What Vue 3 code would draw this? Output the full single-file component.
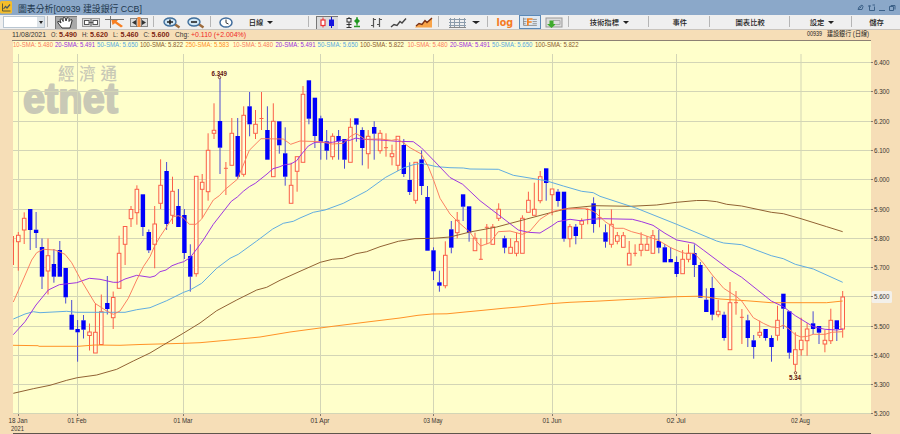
<template>
  <div class="window">
    <header class="titlebar">
      <svg class="app-icon" width="13" height="14" viewBox="0 0 13 14">
        <rect x="0" y="1" width="12" height="12.5" rx="1.5" fill="#f5bd2b" />
        <path d="M2.5 3.5V11H10.5" fill="none" stroke="#5d5a38" stroke-width="1" />
        <path d="M3.5 9L5.5 6.5L7 8L10 4.5" fill="none" stroke="#4a5a60" stroke-width="1.2" />
      </svg>
      <svg class="title" width="140" height="15">
        <text x="0" y="12" textLength="124" lengthAdjust="spacingAndGlyphs">圖表分析[00939 建設銀行 CCB]</text>
      </svg>
      <svg class="window-buttons" width="40" height="14" viewBox="0 0 40 14" fill="none" stroke="#3c6188" stroke-width="1">
        <path d="M1 9.5L2 7L5 5L6 6.5L5 9.5Z M2.5 8.5L4.5 6.5" />
        <path d="M12.5 5.5V10.5H17.5V6.5M11 6H14M15.5 5H18" />
        <path d="M22 10.5H28" />
        <path d="M32.5 6.5H36.5V10.5H32.5Z M34 6V5.5H38V9.5" />
      </svg>
    </header>

    <nav class="toolbar">
      <div class="cell select-cell">
        <div class="select"><span class="caret small"></span></div>
      </div>
      <div class="cell tools">
        <svg class="pressed" width="22" height="13" viewBox="0 0 22 13">
          <path d="M7 12L3 7Q2 5 4 5.5L6 7L5 3.5Q6 2 7.2 3.5L8.2 5.5L8 2Q9.2 .8 10.3 2.2L11 5L12 2Q13.5 1 14 2.5V5.5L15.8 3.5Q17.5 3.5 17 5L15 12Z" fill="#fff" stroke="#333" />
        </svg>
        <svg width="18" height="13" viewBox="0 0 18 13" fill="none" stroke="#555">
          <rect x=".5" y="2.5" width="17" height="8" fill="#ddd" stroke="#999" />
          <rect x="2.5" y="4.5" width="4.5" height="4" fill="#fff" />
          <rect x="11" y="4.5" width="4.5" height="4" fill="#fff" />
          <path d="M7 6.5H11M9 3V10" />
        </svg>
        <svg width="20" height="13" viewBox="0 0 20 13">
          <path d="M0 3.5H19M5.5 0V12" stroke="#777" />
          <path d="M6.5 4H13L11.5 5.5L18 10L16 11.5L10 7.2L7.5 9Z" fill="#f77f22" />
        </svg>
        <svg width="18" height="13" viewBox="0 0 18 13">
          <rect x=".5" y="2.5" width="17" height="8" fill="#ddd" stroke="#888" />
          <path d="M2 6.5L6 4V9Z M16 6.5L12 4V9Z" fill="#333" />
          <rect x="7.5" y="1" width="3" height="10" fill="#f48a3a" />
          <path d="M6.5 2V11M11.5 2V11" stroke="#777" />
        </svg>
      </div>
      <div class="cell zooms">
        <svg v-for="sign in ['+', '-']" :key="sign" width="18" height="13" viewBox="0 0 18 13">
          <path d="M11.5 8L16.5 11.5" stroke="#9d6b3c" stroke-width="2.5" />
          <ellipse cx="7" cy="6" rx="6" ry="4" fill="#cfe6f5" stroke="#3f6e9b" stroke-width="1.4" />
          <path :d="sign === '+' ? 'M4 6H10M7 3.5V8.5' : 'M4 6H10'" stroke="#222" stroke-width="1.6" />
        </svg>
      </div>
      <div class="cell period">
        <svg width="14" height="13" viewBox="0 0 14 13">
          <ellipse cx="7" cy="6.5" rx="6" ry="4.6" fill="#fff" stroke="#3f6c9c" stroke-width="1.5" />
          <path d="M7 3.5V6.8L9.5 8" fill="none" stroke="#333" />
        </svg>
        <span>日線</span><i class="caret"></i>
      </div>
      <div class="cell styles">
        <svg class="pressed light" width="22" height="13" viewBox="0 0 22 13">
          <path d="M7 1.5V11.5" stroke="#e33" />
          <rect x="5" y="4" width="4" height="5.5" fill="#fff" stroke="#e33" stroke-width="1.2" />
          <path d="M15.5 1V12" stroke="#11c" />
          <rect x="13" y="3.5" width="5" height="6.5" fill="#1414e0" />
        </svg>
        <svg width="17" height="13" viewBox="0 0 17 13">
          <path d="M4 1V11.5M1.5 8.5H6.5M1.5 11.5H6.5" stroke="#333" />
          <rect x="2" y="2.5" width="4" height="3.5" fill="#eee" stroke="#333" />
          <path d="M12 1V9.5M9 10.5H15" stroke="#2a9a2a" stroke-width="1.3" />
          <path d="M12 2L15 5L12 8L9 5Z" fill="#209820" />
        </svg>
        <svg width="13" height="13" viewBox="0 0 13 13">
          <path d="M3.5 2V11.5M1 9.5H3.5M3.5 3.5H6M9.5 2V11M7 8.5H9.5M9.5 3.5H12" stroke="#555" stroke-width="1.2" />
        </svg>
        <svg width="17" height="13" viewBox="0 0 17 13">
          <path d="M1 11L4 8.5L7 9.5L10 5.5L12 7L16 2.5" fill="none" stroke="#444" stroke-width="1.4" />
        </svg>
        <svg width="18" height="13" viewBox="0 0 18 13">
          <path d="M1 10L4 8L7 8.5L10 5L12 6L17 2V11.5H0Z" fill="#f8a449" />
          <path d="M1 10L4 7.5L7 8.5L10 4.5L12 6.5L17 2" fill="none" stroke="#7a3215" stroke-width="1.4" />
        </svg>
      </div>
      <div class="cell lines">
        <svg width="17" height="13" viewBox="0 0 17 13">
          <path d="M0 3.5H17M0 6.5H17M0 9.5H17M1.5 2V12M5.5 2V12M10.5 2V12M15.5 2V12" stroke="#8c9cab" />
          <path d="M0 11.5H17" stroke="#888" />
        </svg>
        <i class="caret wide"></i>
      </div>
      <div class="cell log">
        <b>log</b>
        <svg class="boxed" width="22" height="14" viewBox="0 0 22 14">
          <path d="M3.5 2V11H19M3 3.5H7M3 6.5H7M3 9H6M14 4H19M14 6.5H19M14 9H19" fill="none" stroke="#888" />
          <path d="M8.5 11V3.5H14M8.5 7H13" fill="none" stroke="#f58220" stroke-width="2" />
        </svg>
        <svg width="18" height="13" viewBox="0 0 18 13">
          <rect x="1" y="2" width="16" height="9" fill="#ddd" stroke="#999" />
          <path d="M8 4.5H15V8.5H11" fill="none" stroke="#aaa" />
          <path d="M4.5 4.5H8.5V8H11L6.5 12L2 8H4.5Z" fill="#3faa2c" />
        </svg>
      </div>
      <div v-for="menu in menus" :key="menu.label" class="cell menu" :class="menu.name">
        <span>{{ menu.label }}</span><i v-if="menu.caret" class="caret"></i>
      </div>
    </nav>

    <svg class="chart" width="900" height="404" viewBox="0 30 900 404">
      <rect x="0" y="30" width="900" height="404" fill="#f6deb7" />
      <rect x="13" y="41" width="858" height="373" fill="#ffffcb" />
      <path d="M12 40.5H871" stroke="#8d8173" />

      <!-- quote line -->
      <g class="quote">
        <text
          v-for="item in quote"
          :key="item.x"
          :x="item.x"
          y="37"
          :class="item.kind"
          :textLength="item.w"
          lengthAdjust="spacingAndGlyphs"
        >{{ item.text }}</text>
        <text class="code" x="807" y="36.3" textLength="15" lengthAdjust="spacingAndGlyphs">00939</text>
        <text class="code" x="827" y="36.3" textLength="42" lengthAdjust="spacingAndGlyphs">建設銀行 (日線)</text>
      </g>

      <!-- watermark -->
      <g class="watermark">
        <text class="brand-zh" x="58" y="79.8" textLength="59">經濟通</text>
        <text class="brand" x="23" y="112.6" textLength="95" lengthAdjust="spacingAndGlyphs">etnet</text>
      </g>

      <!-- grid -->
      <g class="grid">
        <path v-for="row in prices" :key="row.label" :d="`M13 ${row.y}H871`" />
        <path v-for="m in months" :key="m.label" :d="`M${m.x} 54V414`" />
      </g>

      <!-- candles -->
      <g v-for="c in candles" :key="c.x" :class="c.kind">
        <path v-if="c.wick" class="wick" :d="c.wick" />
        <rect v-if="c.kind !== 'doji'" :x="c.x - c.half" :y="c.top" :width="c.half * 2" :height="c.height" />
        <path v-else :d="`M${c.x - 2} ${c.top}h4`" />
      </g>

      <!-- moving averages -->
      <polyline v-for="line in averages" :key="line.color" class="average" :points="line.points" :stroke="line.color" />

      <g class="legend">
        <text
          v-for="item in legend"
          :key="item.x"
          :x="item.x"
          y="47.3"
          :fill="item.color"
          :textLength="item.w"
          lengthAdjust="spacingAndGlyphs"
        >{{ item.text }}</text>
      </g>

      <g class="extreme">
        <circle cx="219.5" cy="77.5" r="1.2" />
        <text x="211.5" y="76" textLength="15.5" lengthAdjust="spacingAndGlyphs">6.349</text>
        <circle cx="795.5" cy="372.8" r="1.2" />
        <text x="789" y="379.8" textLength="12" lengthAdjust="spacingAndGlyphs">5.34</text>
      </g>

      <!-- axes -->
      <rect x="871.5" y="291" width="20.5" height="12" rx="1.5" fill="#f3f0ea" />
      <g class="axis">
        <template v-for="row in prices" :key="row.label">
          <path :d="`M871 ${row.y}h2`" />
          <text x="874" :y="row.y + 2.5" textLength="15.5" lengthAdjust="spacingAndGlyphs">{{ row.label }}</text>
        </template>
        <template v-for="m in months" :key="m.label">
          <path :d="`M${m.x} 414v2`" />
          <text :x="m.x - 0.5" y="423" text-anchor="middle" textLength="19" lengthAdjust="spacingAndGlyphs">{{ m.label }}</text>
        </template>
        <text x="11" y="431" textLength="13" lengthAdjust="spacingAndGlyphs">2021</text>
      </g>
      <path d="M13 433.5H871" stroke="#5e554b" />
    </svg>
  </div>
</template>

<script setup>
const menus = [
  { label: '技術指標', name: 'indicators', caret: true },
  { label: '事件', name: 'events' },
  { label: '圖表比較', name: 'compare' },
  { label: '設定', name: 'settings', caret: true },
  { label: '儲存', name: 'save' }
]

const quote = [
  { x: 12, w: 34, text: '11/08/2021' },
  { x: 51, w: 6, text: 'O:' },
  { x: 59, w: 18, text: '5.490', kind: 'value' },
  { x: 82, w: 6, text: 'H:' },
  { x: 90, w: 18, text: '5.620', kind: 'value' },
  { x: 113, w: 5, text: 'L:' },
  { x: 120.5, w: 18, text: '5.460', kind: 'value' },
  { x: 143.5, w: 6, text: 'C:' },
  { x: 151.5, w: 18, text: '5.600', kind: 'value' },
  { x: 175, w: 14, text: 'Chg:' },
  { x: 191, w: 55, text: '+0.110 (+2.004%)', kind: 'change' }
]

const RED = '#fb7a5c'
const PURPLE = '#9a2be0'
const BLUE = '#58a8e0'
const BROWN = '#8b5a2b'
const ORANGE = '#ff8c1e'

const legend = [
  { x: 13, w: 40, text: '10-SMA: 5.480', color: RED },
  { x: 55, w: 40, text: '20-SMA: 5.491', color: PURPLE },
  { x: 97, w: 41, text: '50-SMA: 5.650', color: BLUE },
  { x: 140, w: 43, text: '100-SMA: 5.822', color: BROWN },
  { x: 185.5, w: 43.5, text: '250-SMA: 5.583', color: ORANGE },
  { x: 233, w: 40, text: '10-SMA: 5.480', color: RED },
  { x: 275.5, w: 40, text: '20-SMA: 5.491', color: PURPLE },
  { x: 317.5, w: 40.5, text: '50-SMA: 5.650', color: BLUE },
  { x: 360, w: 44, text: '100-SMA: 5.822', color: BROWN },
  { x: 407.5, w: 40, text: '10-SMA: 5.480', color: RED },
  { x: 450, w: 40, text: '20-SMA: 5.491', color: PURPLE },
  { x: 492, w: 40.5, text: '50-SMA: 5.650', color: BLUE },
  { x: 535, w: 43.5, text: '100-SMA: 5.822', color: BROWN }
]

const rowY = [62.5, 91.5, 121.5, 150.5, 179.5, 209.5, 238.5, 267.5, 296.5, 326.5, 355.5, 384.5, 413.5]
const prices = rowY.map((y, i) => ({ y, label: (6.4 - i * 0.1).toFixed(3) }))

const months = [
  { x: 18.5, label: '18 Jan' },
  { x: 77.5, label: '01 Feb' },
  { x: 183.5, label: '01 Mar' },
  { x: 320.5, label: '01 Apr' },
  { x: 433.5, label: '03 May' },
  { x: 552.5, label: '01 Jun' },
  { x: 676.5, label: '02 Jul' },
  { x: 801, label: '02 Aug' }
]

// kind, high, body top, body bottom, low; one entry per trading day
const days = `
r 236 240 241 265|r 232 235.3 241.7 270.7|r 212.3 218.3 230 244|b 209 209 230 250|b 212 229.7 233 248
b 238.5 247 276.7 289|r 238.5 255.7 271 294.5|b 249 264 276.7 282.7|b 241 250 276.7 276.7|b 268 268 297.3 303.5
b 300 314.7 329.7 329.7|b 320 329 332.3 361.7|b 315 320.3 329.7 338.5|r 323.5 332 335.5 350.5|r 303.5 332.3 353 353
r 294.5 311.7 344.5 344.5|b 276 303 309 314.5|r 291.5 297.5 317.7 329|r 235.7 253.3 288.3 288.3|r 226.5 226.5 244.3 265
r 206 209.5 218.7 227|r 185.3 189.3 212.7 224.7|b 194.3 194.3 227 236|b 229.5 232 250.3 253|r 206 224 244.3 268.3
r 159.3 185.3 203.3 209|b 162 171 224 230|r 176.7 191.3 215.3 224|b 189 206 227 227|b 209 215 253 259
b 244.3 256 276.7 291.7|r 176.3 176.3 273.7 276.7|r 174 182.3 189.3 218|r 133.3 150.3 191.7 200.7|r 103.3 130.3 133.3 139
b 77.3 121 147.7 174|d 162 168.3 168.3 195|r 118 133.3 165.3 165.3|b 118 136 176.7 179|r 106.3 115.3 174.3 176.7
b 92 106.3 124.3 136.3|r 110 124.3 133.3 139|d 92 118.5 118.5 130|b 106.3 130 159.7 159.7|r 103.3 121.3 176.7 176.7
b 121.3 121.3 145.3 153.7|b 127.3 153.3 176.7 185.7|r 162.7 185.3 203.3 203.3|r 156.7 156.7 171.3 191.7|r 86 94.3 162.3 162.3
b 80.3 80.3 118.7 124.3|b 97.7 97.7 136 148|b 115.7 118.3 141.7 159.7|b 130 141.3 150.7 159.7|r 133.3 136.3 156.7 159.7
b 130 136 141.3 159.7|b 139 139 159.7 168.7|r 118.3 127.3 162.3 162.3|b 118.3 118.3 124.7 141.7|b 127.3 130 148 165.3
r 130 136.3 153.7 168.7|b 121.3 127 133.7 159.7|r 130 133.3 150.7 153.7|d 133.3 147.7 147.7 156.7|r 144.7 153.7 156.7 165.3
r 136.3 136.3 165.3 171|b 139 145 174 177|b 162.3 180 192 195|r 162.3 162.3 200.3 203.7|b 150.3 159.3 186 195
b 186 197 250.7 250.7|b 247.3 250.3 271.3 280|b 270.7 282.3 285.7 291.7|r 241.3 255.3 285.7 288.3|b 221 229.3 247.7 253.3
r 212 220.3 232.7 238.3|b 194.3 194.3 206.7 221|b 206.3 206.3 232.7 241.7|r 232.7 238.3 250.7 250.7|d 238.3 259.3 259.3 259.3
d 224 227.3 227.3 244.3|r 224 227 244.3 244.3|r 203.3 209.3 218.3 221|b 235.7 238.3 247.7 253.3|r 238.3 247.3 253.3 253.3
r 232.7 241.7 253.3 256.3|r 215.3 218.3 253.3 253.3|r 191.7 200.3 212.3 212.3|r 182.7 209.3 215.3 215.3|r 171 176.7 200.7 203.3
b 168.3 168.3 183 200.7|r 189 189 194.7 215.3|b 189 191.7 201 206.7|b 191.7 191.7 238.7 241.7|r 224 226.7 238.7 247.3
b 224 226.7 236 244.3|r 218.3 221 224.3 239|d 209.3 209.5 209.5 224.3|b 197.3 203.3 224 232.7|d 209.3 217.7 217.7 227.3
b 224.3 232.3 241.7 247.7|r 209.3 224.3 244.3 247.7|r 232 235.7 241.3 244.3|r 232 235.7 247.3 247.3|r 241 253.3 265 265
d 244.3 253.3 253.3 256.3|r 232.3 244.3 250.3 256.3|r 236 244.3 250.3 250.3|r 230 235.7 253.3 253.3|b 230 241 247.7 253.3
b 244 247.3 262.3 262.3|b 247.3 259 262.3 262.3|b 256.3 262 274 277|r 250 259.3 273.7 273.7|r 244.3 253.3 259.3 262.3
b 244.3 253 265 277|b 262 265 297.7 297.7|b 288.3 299.7 312 312|b 276.7 288 314.7 320.3|r 299.7 311.3 314.7 317.3
b 311.7 314.7 338 340.7|r 282 302.7 349.7 349.7|d 291 302.7 302.7 314.7|d 309 317.3 317.3 344|b 314.7 320.3 338 347
b 335 340.3 347 358.7|r 320.7 332.3 335.3 338|b 329 329 338 340.7|b 335.3 338 347 361.7|r 305.7 320.3 335.3 340.7
b 293.7 293.7 308.7 329|b 311 311.3 352.7 358.7|r 332.3 349.7 364.3 371.7|r 317.7 340.3 349.7 355.7|r 323.3 329 340.7 355.7
b 311.3 323.3 329 334.3|b 326 326 332.7 344|r 330 340.3 344 352.3|r 308.7 320.3 340.7 344|b 320.3 320.3 329 341
r 291 297 329 337.7`

const kinds = { r: 'rise', b: 'fall', d: 'doji' }

const candles = days.trim().split(/[|\n]/).map((entry, i) => {
  const [k, ...values] = entry.split(' ')
  const [high, top, bottom, low] = values.map(Number)
  const x = Math.max(13.5, +(18.3 + (i - 1) * 5.931).toFixed(1))
  let wick = ''
  if (k === 'd') wick = `M${x} ${high}V${low}`
  else {
    if (high < top) wick += `M${x} ${high}V${top}`
    if (low > bottom) wick += `M${x} ${bottom}V${low}`
  }
  const half = k === 'b' ? 2.2 : i === 0 ? 0.1 : 1.8
  return { kind: kinds[k], x, half, top, height: Math.max(bottom - top, 2), wick }
})

const averages = [
  {
    color: ORANGE,
    points: '13,345.3 38,345.7 39,346.3 78,346.3 95,345 120,345.3 140,344.5 184,343.3 200,342.7 233,339.7 260,337 290,332 320,328 333,326.3 367,322 400,318 418,315.3 432,314 447,313.8 465,312 483,310.3 503,308.3 519,307 550,303.7 570,302.3 600,301 636.7,299 676.7,296.7 700,296.2 720,299 750,301 771.3,302.7 826.7,302.7 842.7,301'
  },
  {
    color: BROWN,
    points: '13.3,393.3 33.3,388.7 50,385.3 66.7,380.3 77.3,377.7 96.7,375 116.7,369.3 133.3,361 150,353 163.3,345 183.7,333 200,323 216.7,310.7 236.7,300 256.7,290 266.7,287.3 280,280.3 300,271.3 320.3,262.3 332.3,259.3 343.3,258.3 356,253.7 366.7,251.7 380,246.7 398.3,241.3 415,238.7 433.3,238.3 450,237 470,232 496.7,227 526.7,219 552,212.3 568.3,208.3 595,205.7 630,206.3 656.7,205 676.7,202.3 696.7,200.5 706,200.5 716.7,201.7 726.7,204.3 741.7,206 771.3,212.3 783.3,213.7 801,218.7 826.7,226.7 842.7,231.7'
  },
  {
    color: BLUE,
    points: '13.3,319 25,314 33.3,311.7 40,312.7 66.7,311.3 76.7,312.3 125,312.3 136.7,309.7 150,307.7 166.7,300.7 183.7,292.3 190,290 201.7,283.3 216.7,268.3 230,258.3 238.3,254.3 256.7,241 272.7,229 283.3,223.3 293.3,221.3 300,218 313.3,212.3 325,210 343.3,203.3 366.7,191 385.7,177.3 403.3,168 413.3,164.7 421.3,163.3 436.7,166.7 450,167.7 463.3,168 470,169 498.3,169.3 513.3,175.3 546,180.7 563.3,186 581.7,191.3 593.3,192.7 600,196.3 636.7,208.3 676.7,224.3 716.7,241 723.7,243 741.7,244.7 771.3,255.7 783.3,258.7 795.3,264.3 813.3,269 842.7,282.3'
  },
  {
    color: PURPLE,
    points: '13.3,334.7 25,321.7 36,305 48.3,290 59.3,284.7 76.7,282.7 89.3,278.3 100,279.3 113.3,282.3 118.3,282.3 125,279 136.7,275.3 150,277.3 155,276 160,271.7 166,270 172,265.7 178.3,263.3 183.7,261.7 190,257.7 196,250 203.3,240 213.3,224.3 231.3,201.3 237.3,197 243.3,191.3 249.3,186.7 255.3,183.3 267,174 273,168.7 279,167 284.7,164.7 290.7,164 296.7,160.7 300,156 308.3,146 315,142.3 332.3,142.3 343.3,140.3 350,140.3 356,138 361.7,139.3 380,140 396.7,141.3 413.3,141.7 421.3,147.7 433.3,160 450,177.5 462.7,184.3 480,200.7 498.3,214.7 518.3,230 528.3,232.3 540,233 552,225.7 557.7,221.7 570,219.3 580,220.7 590,219.3 603.3,218.7 632.3,219.3 641.7,221.7 653,225.3 665,233.3 676.7,240 694.3,243.3 703.3,250 730,270 741.7,277.3 771.3,301 783.3,306.7 795.3,315.7 813.3,326.7 825,329.3 836.7,330 842.7,329'
  },
  {
    color: RED,
    points: '13.3,302 21.7,283 31.7,260 36.7,252.7 43.3,249.3 55,250 65,254.3 71.7,262.7 80,278.3 95,303.3 106.7,311 113.3,314.3 120,311 128.3,298.3 136.7,280 143.3,266.7 150,256.7 154.3,246.7 160,236.7 166.7,226.7 173.3,216.7 178.3,215.7 183.3,217.7 189.3,224.3 196,224.3 201.7,219 213.3,200 219.3,195.7 225.3,189.3 237.3,179.3 243.3,165 249.3,150.3 261,138.7 283.3,139 290.7,144.3 300,141 320,141.7 332.3,144 343.3,143.3 350,136.7 356,133.3 365,139.3 380,139 391.7,140.3 397.3,139.3 403.3,142.7 410,147.7 421.3,154 428.3,166.7 433.3,179.3 440,198.3 450,214 456.7,220.7 470,232.3 476.7,241.7 480.7,246 490,242.7 498.3,231.7 510,231 522.3,234.3 530,231 540,219.3 552,211.7 563.7,209 586.7,208.3 595,212.3 605.3,221.7 615,228.3 623.3,228.3 631.7,231.7 641.7,234.3 650,237.3 658.3,240.3 670.7,247.7 680,251.7 685,253.3 694.3,253.3 703.3,263 712.3,275 723.7,288.3 735.7,296 741.7,301 753.3,317.7 763.3,323.3 771.3,327 778.3,327.7 783.3,325 789.3,329.3 795.3,334.7 801,337 807.3,336.3 813.3,334.3 825,334.3 831.7,332.3 842.7,331.7'
  }
]
</script>

<style>
body {
  overflow: hidden;
}
</style>

<style scoped>
.window {
  width: 900px;
  height: 434px;
  overflow: hidden;
  background: #f6deb7;
  font-family: "Liberation Sans", "Noto Sans CJK TC", sans-serif;
}

svg {
  display: block;
  flex: none;
}

.titlebar {
  display: flex;
  height: 15px;
  background: #8ba8c9;
}

.title {
  margin-left: 5px;
}

.title text {
  font-size: 9.5px;
  fill: #22384e;
}

.window-buttons {
  margin-left: auto;
  margin-right: 3px;
}

.toolbar {
  display: flex;
  box-sizing: border-box;
  height: 15px;
  background: #efefef;
  border-bottom: 1px solid #c9c4bd;
  font-family: "Noto Sans CJK TC", sans-serif;
  font-size: 7.3px;
  font-weight: 500;
  color: #222;
}

.cell {
  display: flex;
  align-items: center;
  box-sizing: border-box;
  position: relative;
}

.cell:not(:last-child)::after {
  content: "";
  position: absolute;
  right: 0;
  top: 1px;
  height: 11px;
  width: 1px;
  background: #b5b5b5;
}

.select-cell {
  width: 48px;
  padding-left: 3px;
}

.select {
  display: flex;
  align-items: center;
  justify-content: flex-end;
  box-sizing: border-box;
  width: 42px;
  height: 12px;
  padding-right: 1px;
  background: linear-gradient(to right, #fff 33px, #dde3e8 33px);
  border: 1px solid #b9c6d2;
}

.caret {
  border: 3px solid transparent;
  border-top: 3.5px solid #222;
  border-bottom: 0;
  margin-left: 4px;
}

.caret.small {
  border-width: 3px 2.5px 0;
  margin-left: 0;
}

.caret.wide {
  border-width: 3px 4.5px 0;
  margin-left: 6px;
}

.pressed {
  background: #a9a9a9;
  box-shadow: inset 1px 1px #777;
}

.pressed.light {
  background: #dcdcdc;
}

.tools {
  width: 106px;
  padding-left: 7px;
  gap: 5px;
}

.zooms {
  width: 57px;
  padding-left: 9px;
  gap: 6px;
}

.period {
  width: 98px;
  padding-left: 8px;
}

.period span {
  margin-left: 16px;
}

.styles {
  width: 130px;
  padding-left: 7px;
  gap: 7.5px;
}

.lines {
  width: 50px;
  padding-left: 10px;
}

.log {
  width: 81px;
  padding-left: 8px;
}

.log b {
  width: 23px;
  padding-top: 1px;
  font: bold 9.6px/12px "DejaVu Sans", sans-serif;
  color: #f57a1f;
}

.boxed {
  box-sizing: border-box;
  margin-right: 4px;
  background: #dfe9f3;
  border: 1px solid #5c8ab8;
}

.menu {
  justify-content: center;
  line-height: 12px;
}

.indicators {
  width: 80px;
}

.events {
  width: 61px;
}

.compare {
  width: 80px;
}

.settings {
  width: 62px;
  padding-left: 2px;
}

.save {
  width: 48px;
  padding-left: 1px;
}

.quote text {
  font-size: 7.2px;
  fill: #333;
}

.quote .value {
  font-weight: bold;
  fill: #7d1f10;
}

.quote .change {
  fill: #f0281e;
}

.quote .code {
  font-size: 6.6px;
  fill: #222;
}

.watermark {
  fill: #c9c9b6;
}

.brand-zh {
  font: 500 16.5px "Noto Sans CJK TC", sans-serif;
}

.brand {
  font-size: 42px;
  font-weight: bold;
  stroke: #c9c9b6;
  stroke-width: 2px;
  stroke-linejoin: round;
}

.grid path {
  stroke: #d3d5b6;
  fill: none;
}

.rise,
.doji {
  stroke: #fb5f48;
}

.rise rect {
  fill: #ffffdc;
}

.fall {
  stroke: #4a4ad4;
}

.fall rect {
  fill: #0000fa;
  stroke: none;
}

.average {
  fill: none;
  stroke-width: 0.95;
}

.legend text {
  font-size: 6.7px;
}

.extreme circle {
  fill: #ffffcb;
  stroke: #6b1c14;
  stroke-width: 0.8;
}

.extreme text {
  font-size: 6.6px;
  font-weight: bold;
  fill: #5f120c;
}

.axis text {
  font-size: 6.8px;
  fill: #3a3530;
}

.axis path {
  stroke: #857b6f;
}
</style>
